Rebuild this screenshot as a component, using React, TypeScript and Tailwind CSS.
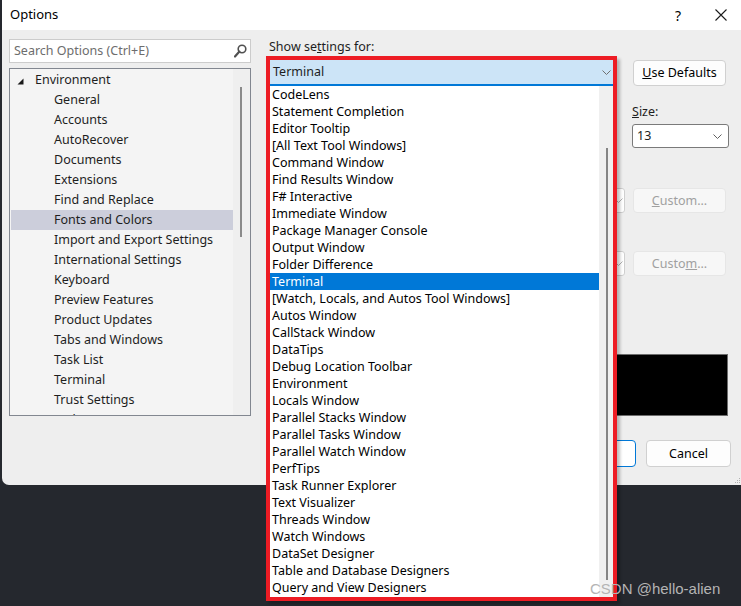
import React from 'react';

const FONT = { fontFamily: '"Noto Sans", "Liberation Sans", sans-serif' };

const treeItems = [
  'General',
  'Accounts',
  'AutoRecover',
  'Documents',
  'Extensions',
  'Find and Replace',
  'Fonts and Colors',
  'Import and Export Settings',
  'International Settings',
  'Keyboard',
  'Preview Features',
  'Product Updates',
  'Tabs and Windows',
  'Task List',
  'Terminal',
  'Trust Settings',
  'Web Browser',
];

const listItems = [
  'CodeLens',
  'Statement Completion',
  'Editor Tooltip',
  '[All Text Tool Windows]',
  'Command Window',
  'Find Results Window',
  'F# Interactive',
  'Immediate Window',
  'Package Manager Console',
  'Output Window',
  'Folder Difference',
  'Terminal',
  '[Watch, Locals, and Autos Tool Windows]',
  'Autos Window',
  'CallStack Window',
  'DataTips',
  'Debug Location Toolbar',
  'Environment',
  'Locals Window',
  'Parallel Stacks Window',
  'Parallel Tasks Window',
  'Parallel Watch Window',
  'PerfTips',
  'Task Runner Explorer',
  'Text Visualizer',
  'Threads Window',
  'Watch Windows',
  'DataSet Designer',
  'Table and Database Designers',
  'Query and View Designers',
];

function Chevron({ color = '#606060' }: { color?: string }) {
  return (
    <svg width="9" height="5" viewBox="0 0 9 5" fill="none">
      <path d="M0.5 0.5 L4.5 4.5 L8.5 0.5" stroke={color} strokeWidth="1" />
    </svg>
  );
}

function SearchIcon() {
  return (
    <svg width="13" height="14" viewBox="0 0 13 14" fill="none">
      <circle cx="8" cy="5" r="3.8" stroke="#505050" strokeWidth="1.6" />
      <path d="M5.4 7.6 L1 12.5" stroke="#505050" strokeWidth="2.2" strokeLinecap="round" />
    </svg>
  );
}

function CloseIcon() {
  return (
    <svg width="12" height="12" viewBox="0 0 12 12" fill="none">
      <path d="M0.5 0.5 L11.5 11.5 M11.5 0.5 L0.5 11.5" stroke="#1a1a1a" strokeWidth="1.1" />
    </svg>
  );
}

function Tree() {
  return (
    <div className="flex h-[348px] mt-[5px] border border-[#828790] bg-[#f4f4f4] overflow-hidden">
      <div className="flex-1 flex flex-col pt-[1px]">
        <div className="h-[20px] shrink-0 flex items-center pl-[7px]">
          <svg width="7" height="7" viewBox="0 0 7 7" className="mr-[11px] mt-[2px]">
            <polygon points="6.5,0.5 6.5,6.5 0.5,6.5" fill="#1a1a1a" />
          </svg>
          <span>Environment</span>
        </div>
        {treeItems.map((item) => (
          <div
            key={item}
            className={`h-[20px] shrink-0 flex items-center pl-[43px] ml-px ${
              item === 'Fonts and Colors' ? 'bg-[#cccedb]' : ''
            }`}
          >
            {item}
          </div>
        ))}
      </div>
      <div className="w-[17px] bg-[#efefef] flex justify-center">
        <div className="w-[2px] h-[150px] mt-[18px] mr-[1px] bg-[#8a8a8a]" />
      </div>
    </div>
  );
}

function Dropdown() {
  return (
    <div className="absolute left-[264px] top-[26px] w-[351px] h-[545px] border-4 border-[#ed1c24] bg-white flex flex-col shadow-[3px_3px_3px_rgba(0,0,0,0.25)] z-10">
      <div className="h-[26px] shrink-0 bg-[#cce4f7] border-b-2 border-[#0078d7] flex items-center justify-between pl-[3px] pr-[2px]">
        <span className="pt-px">Terminal</span>
        <Chevron color="#707070" />
      </div>
      <div className="flex flex-1 overflow-hidden">
        <div className="flex-1 flex flex-col">
          {listItems.map((item, i) => (
            <div
              key={i}
              className={`h-[17px] shrink-0 flex items-center pl-[2px] pt-px whitespace-nowrap ${
                i === 11 ? 'bg-[#0078d7] text-white' : 'text-black'
              }`}
            >
              {item}
            </div>
          ))}
        </div>
        <div className="w-[14px] bg-[#f0f0f0] flex">
          <div className="w-[2px] h-[432px] mt-[62px] ml-[7px] bg-[#858585]" />
        </div>
      </div>
    </div>
  );
}

function Button({
  children,
  disabled,
  className = '',
}: {
  children: React.ReactNode;
  disabled?: boolean;
  className?: string;
}) {
  return (
    <div
      className={`flex items-center justify-center rounded-[4px] border ${
        disabled ? 'bg-[#f7f7f7] border-[#e6e6e6] text-[#a0a0a0]' : 'bg-[#fdfdfd] border-[#d0d0d0] text-black'
      } ${className}`}
    >
      {children}
    </div>
  );
}

function RightPanel() {
  return (
    <div className="flex-1 flex flex-col pt-[10px] pl-[18px] pr-[10px]">
      {/* show settings + use defaults */}
      <div className="flex gap-[7px]">
        <div className="flex-1">
          <div className="h-[14px] leading-[14px]">
            Show se<span className="underline">t</span>tings for:
          </div>
          <div className="w-[345px] h-[25px] mt-[6px] bg-white border border-[#7a7a7a]" />
        </div>
        <div className="w-[99px] pt-[20px] pl-[1px]">
          <Button className="w-[93px] h-[26px]">
            <span>
              <span className="underline">U</span>se Defaults
            </span>
          </Button>
        </div>
      </div>

      {/* size */}
      <div className="flex gap-[7px]">
        <div className="flex-1" />
        <div className="w-[99px]">
          <div className="mt-[19px] h-[14px] leading-[14px]">
            <span className="underline">S</span>ize:
          </div>
          <div className="mt-[5px] w-[97px] h-[24px] bg-white border border-[#7a7a7a] rounded-[3px] flex items-center justify-between pl-[4px] pr-[6px]">
            <span>13</span>
            <Chevron />
          </div>
        </div>
      </div>

      {/* foreground */}
      <div className="flex gap-[7px] mt-[40px]">
        <div className="flex-1 h-[25px] bg-white border border-[#cfcfcf] rounded-[3px] flex items-center justify-end pr-[1px]">
          <Chevron color="#b0b0b0" />
        </div>
        <div className="w-[99px] pl-[1px]">
          <Button disabled className="w-[93px] h-[25px] pt-px">
            <span>
              <span className="underline">C</span>ustom...
            </span>
          </Button>
        </div>
      </div>

      {/* background */}
      <div className="flex gap-[7px] mt-[38px]">
        <div className="flex-1 h-[25px] bg-white border border-[#cfcfcf] rounded-[3px] flex items-center justify-end pr-[1px]">
          <Chevron color="#b0b0b0" />
        </div>
        <div className="w-[99px] pl-[1px]">
          <Button disabled className="w-[93px] h-[25px] pt-px">
            <span>
              Custo<span className="underline">m</span>...
            </span>
          </Button>
        </div>
      </div>

      {/* sample */}
      <div className="mt-[78px] mr-[3px] h-[62px] bg-black border border-[#6d6d6d]" />

      {/* ok / cancel */}
      <div className="flex justify-end gap-[10px] mt-[24px]">
        <Button className="w-[86px] h-[27px] pt-px !border-[#0078d7] !bg-white">OK</Button>
        <Button className="w-[85px] h-[27px] pt-px">Cancel</Button>
      </div>
    </div>
  );
}

export default function App() {
  return (
    <div className="relative w-[741px] h-[606px] bg-[#25282e] overflow-hidden text-[12.5px] text-[#1e1e1e]" style={FONT}>
      <div className="ml-[2px] h-[485px] bg-[#eeeeee] rounded-bl-[7px] flex flex-col">
        {/* title bar */}
        <div className="h-[30px] shrink-0 bg-white flex items-center pl-[8px]">
          <span className="text-[13px] text-black">Options</span>
          <div className="flex-1" />
          <span className="text-[14px] text-black mr-[34px]">?</span>
          <div className="mr-[14px] flex items-center">
            <CloseIcon />
          </div>
        </div>

        {/* body */}
        <div className="relative flex flex-1">
          <div className="w-[242px] ml-[7px] pt-[9px] flex flex-col">
            <div className="h-[24px] bg-white border border-[#cccccc] flex items-center justify-between pl-[4px] pr-[3px]">
              <span className="text-[#6d6d6d]">Search Options (Ctrl+E)</span>
              <SearchIcon />
            </div>
            <Tree />
          </div>
          <RightPanel />
          <Dropdown />
          {/* resize grip */}
          <div className="absolute right-[1px] bottom-[2px] grid grid-cols-3 gap-[1px]">
            {[0, 0, 1, 0, 1, 1, 1, 1, 1].map((v, i) => (
              <div key={i} className={`w-[1px] h-[1px] ${v ? 'bg-[#b0b0b0]' : ''}`} />
            ))}
          </div>
        </div>
      </div>

      <div
        className="absolute left-[590px] top-[578px] text-[15px] text-[#b4b4b4] z-20"
        style={{ fontFamily: '"Liberation Sans", Arial, sans-serif' }}
      >
        CSDN @hello-alien
      </div>
    </div>
  );
}
